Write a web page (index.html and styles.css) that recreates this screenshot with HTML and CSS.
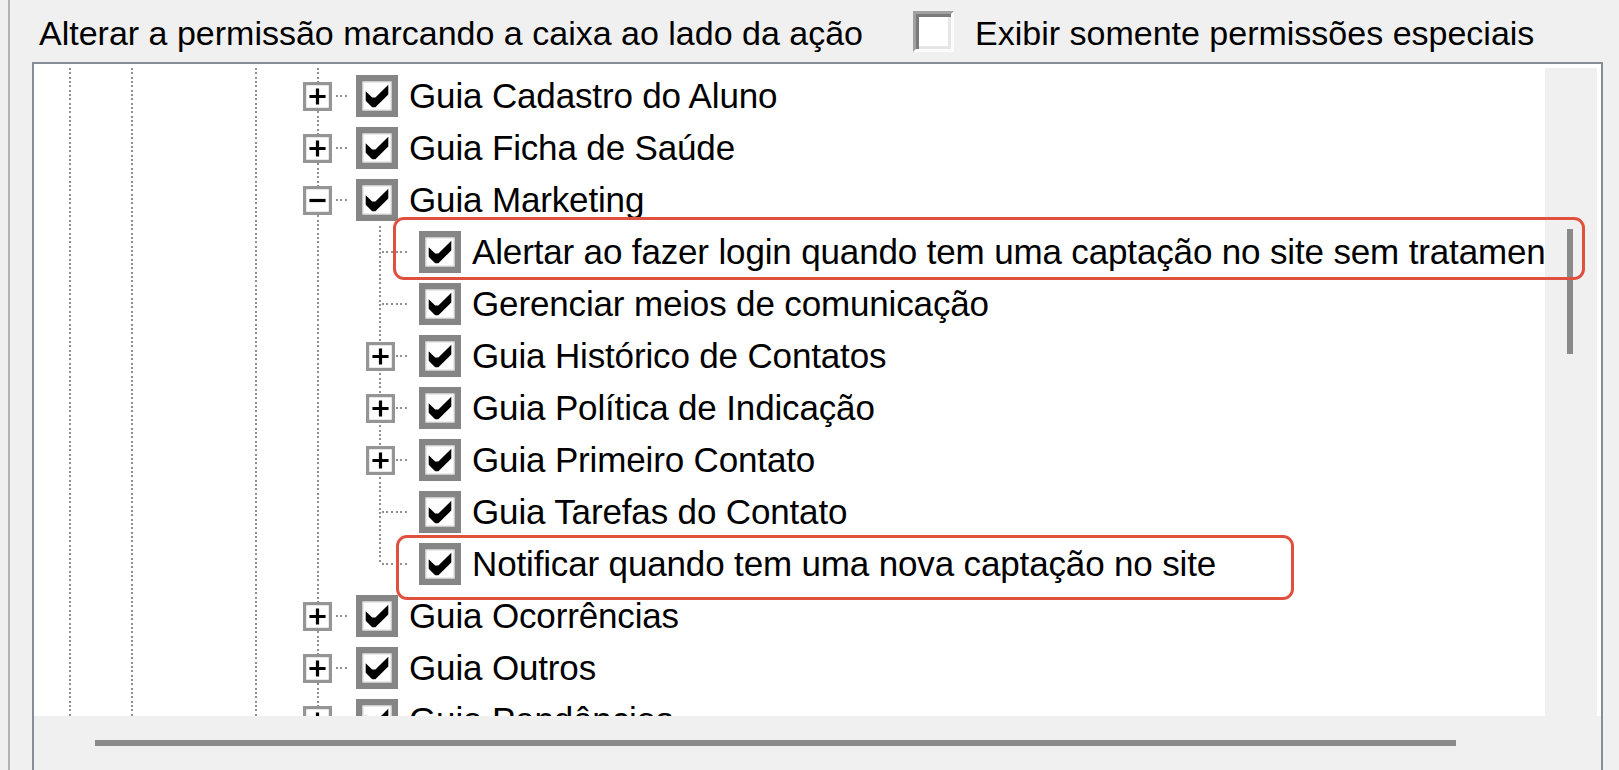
FILE: index.html
```
<!DOCTYPE html>
<html lang="pt-BR">
<head>
<meta charset="utf-8">
<title>Permissões</title>
<link rel="stylesheet" href="styles.css">
</head>
<body>
<svg class="defs" width="0" height="0" aria-hidden="true">
  <defs>
    <symbol id="chk" viewBox="0 0 13 13">
      <rect x="1" y="1" width="11" height="11" fill="#fff" stroke="#858585" stroke-width="2"/>
      <rect x="2.15" y="2.15" width="8.7" height="8.7" fill="none" stroke="#cfcfcf" stroke-width="0.3"/>
      <polygon points="3,5 5,7 6,7 10,3 10,6 6,10 5,10 3,8" fill="#000"/>
    </symbol>
    <symbol id="plus" viewBox="0 0 9 9">
      <rect x="0.5" y="0.5" width="8" height="8" fill="#fff" stroke="#959595" stroke-width="1"/>
      <path d="M2 4.5H7M4.5 2V7" stroke="#000" stroke-width="1" fill="none"/>
    </symbol>
    <symbol id="minus" viewBox="0 0 9 9">
      <rect x="0.5" y="0.5" width="8" height="8" fill="#fff" stroke="#959595" stroke-width="1"/>
      <path d="M2 4.5H7" stroke="#000" stroke-width="1" fill="none"/>
    </symbol>
  </defs>
</svg>
<div class="window">
  <div class="header">
    <span class="caption">Alterar a permissão marcando a caixa ao lado da ação</span>
    <span class="hcheck"></span>
    <span class="caption">Exibir somente permissões especiais</span>
  </div>
  <div class="tree">
    <div class="tree-body">
      <div class="list">
        <div class="row l1"><span class="exp"><svg class="box"><use href="#plus"/></svg></span><span class="conn"></span><svg class="cb"><use href="#chk"/></svg><span class="label">Guia Cadastro do Aluno</span></div>
        <div class="row l1"><span class="exp"><svg class="box"><use href="#plus"/></svg></span><span class="conn"></span><svg class="cb"><use href="#chk"/></svg><span class="label">Guia Ficha de Saúde</span></div>
        <div class="row l1"><span class="exp"><svg class="box"><use href="#minus"/></svg></span><span class="conn"></span><svg class="cb"><use href="#chk"/></svg><span class="label">Guia Marketing</span></div>
        <div class="row l2"><span class="exp branch"></span><span class="conn"></span><svg class="cb"><use href="#chk"/></svg><span class="label">Alertar ao fazer login quando tem uma captação no site sem tratamento</span></div>
        <div class="row l2"><span class="exp branch"></span><span class="conn"></span><svg class="cb"><use href="#chk"/></svg><span class="label">Gerenciar meios de comunicação</span></div>
        <div class="row l2"><span class="exp branch"><svg class="box"><use href="#plus"/></svg></span><span class="conn"></span><svg class="cb"><use href="#chk"/></svg><span class="label">Guia Histórico de Contatos</span></div>
        <div class="row l2"><span class="exp branch"><svg class="box"><use href="#plus"/></svg></span><span class="conn"></span><svg class="cb"><use href="#chk"/></svg><span class="label">Guia Política de Indicação</span></div>
        <div class="row l2"><span class="exp branch"><svg class="box"><use href="#plus"/></svg></span><span class="conn"></span><svg class="cb"><use href="#chk"/></svg><span class="label">Guia Primeiro Contato</span></div>
        <div class="row l2"><span class="exp branch"></span><span class="conn"></span><svg class="cb"><use href="#chk"/></svg><span class="label">Guia Tarefas do Contato</span></div>
        <div class="row l2"><span class="exp branch last"></span><span class="conn"></span><svg class="cb"><use href="#chk"/></svg><span class="label">Notificar quando tem uma nova captação no site</span></div>
        <div class="row l1"><span class="exp"><svg class="box"><use href="#plus"/></svg></span><span class="conn"></span><svg class="cb"><use href="#chk"/></svg><span class="label">Guia Ocorrências</span></div>
        <div class="row l1"><span class="exp"><svg class="box"><use href="#plus"/></svg></span><span class="conn"></span><svg class="cb"><use href="#chk"/></svg><span class="label">Guia Outros</span></div>
        <div class="row l1"><span class="exp"><svg class="box"><use href="#plus"/></svg></span><span class="conn"></span><svg class="cb"><use href="#chk"/></svg><span class="label">Guia Pendências</span></div>
      </div>
      <div class="vscroll"><div class="vthumb"></div></div>
    </div>
    <div class="hscroll"><div class="hthumb"></div></div>
  </div>
</div>
<div class="mark mark-1"></div>
<div class="mark mark-2"></div>
</body>
</html>
```

FILE: styles.css
```
html, body {
  margin: 0;
  padding: 0;
}

body {
  position: relative;
  width: 1619px;
  height: 770px;
  overflow: hidden;
  background: #f0f0f0;
  font-family: "Liberation Sans", Arial, sans-serif;
  font-size: 35px;
  color: #000;
}

.defs {
  position: absolute;
  width: 0;
  height: 0;
  overflow: hidden;
}

.window {
  margin-left: 8px;
  height: 770px;
  box-sizing: border-box;
  border-left: 2px solid #b3b3b3;
  padding-left: 22px;
}

.header {
  height: 62px;
  display: flex;
  align-items: center;
  padding-left: 7px;
}

.caption {
  white-space: nowrap;
  font-size: 34px;
  padding-top: 4px;
}

.hcheck {
  flex: none;
  width: 41px;
  height: 41px;
  box-sizing: border-box;
  margin: 0 21px 0 50px;
  background: #fff;
  border: 3px solid;
  border-color: #a0a0a0 #fcfcfc #fcfcfc #a0a0a0;
  box-shadow: inset 3px 3px 0 #7a7a7a, inset -3px -3px 0 #e6e6e6;
}

.tree {
  width: 1571px;
  height: 740px;
  box-sizing: border-box;
  border: 2px solid #878d96;
  background: #f0f0f0;
}

.tree-body {
  display: flex;
  background: #fff;
  padding: 4px 4px 0 0;
}

.list {
  flex: 1;
  min-width: 0;
  height: 648px;
  box-sizing: border-box;
  padding-top: 2px;
  overflow: hidden;
  background-image:
    repeating-linear-gradient(to bottom, #8f8f8f 0 2px, transparent 2px 4.333px),
    repeating-linear-gradient(to bottom, #8f8f8f 0 2px, transparent 2px 4.333px),
    repeating-linear-gradient(to bottom, #8f8f8f 0 2px, transparent 2px 4.333px),
    repeating-linear-gradient(to bottom, #8f8f8f 0 2px, transparent 2px 4.333px);
  background-size: 2px 100%;
  background-position: 35px 0, 97px 0, 221px 0, 283px 0;
  background-repeat: no-repeat;
}

.row {
  display: flex;
  align-items: center;
  height: 52px;
  white-space: nowrap;
}

.row.l1 {
  padding-left: 269px;
}

.row.l2 {
  padding-left: 332px;
}

.exp {
  flex: none;
  width: 29px;
  height: 52px;
  display: flex;
  align-items: center;
}

.exp.branch {
  background-image:
    repeating-linear-gradient(to bottom, #8f8f8f 0 2px, transparent 2px 4.333px),
    repeating-linear-gradient(to right, #8f8f8f 0 2px, transparent 2px 4.4px);
  background-size: 2px 100%, 14px 2px;
  background-position: 13px 0, 16px 25px;
  background-repeat: no-repeat;
}

.exp.branch.last {
  background-size: 2px 26px, 14px 2px;
}

.box {
  display: block;
  width: 29px;
  height: 29px;
}

.conn {
  flex: none;
  width: 24px;
  height: 52px;
  background-image: repeating-linear-gradient(to right, #8f8f8f 0 2px, transparent 2px 4.4px);
  background-size: 12px 2px;
  background-position: 4px 25px;
  background-repeat: no-repeat;
}

.l2 .conn {
  background-size: 13px 2px;
  background-position: 1px 25px;
}

.cb {
  flex: none;
  display: block;
  width: 42px;
  height: 42px;
  margin-right: 11px;
}

.label {
  white-space: nowrap;
  letter-spacing: -0.15px;
}

.vscroll {
  flex: none;
  width: 52px;
  height: 648px;
  background: #f0f0f0;
}

.vthumb {
  width: 6px;
  height: 125px;
  margin: 161px 0 0 22px;
  background: #8a8a8a;
}

.hscroll {
  height: 60px;
  box-sizing: border-box;
  padding: 24px 0 0 61px;
  background: #f0f0f0;
}

.hthumb {
  width: 1361px;
  height: 6px;
  background: #8a8a8a;
}

.mark {
  position: absolute;
  box-sizing: border-box;
  border: 3px solid #e0503e;
  border-radius: 11px;
}

.mark-1 {
  left: 393px;
  top: 217px;
  width: 1192px;
  height: 63px;
}

.mark-2 {
  left: 396px;
  top: 535px;
  width: 898px;
  height: 65px;
}
```
